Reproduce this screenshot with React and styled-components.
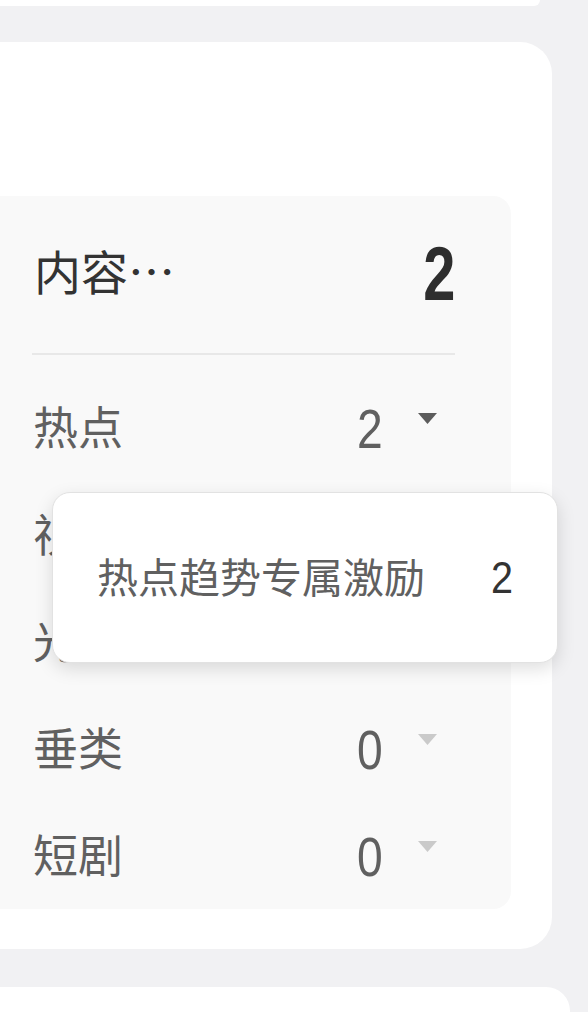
import React from 'react'
import styled, { createGlobalStyle, css } from 'styled-components'

const GlobalStyle = createGlobalStyle`
  html, body {
    margin: 0;
    padding: 0;
    background: #f1f1f3;
  }
  body {
    font-family: "Noto Sans CJK SC", "Noto Sans", sans-serif;
    overflow: hidden;
  }
`

const Page = styled.div`
  display: flex;
  flex-direction: column;
  height: 1012px;
  overflow: hidden;
`
const TopCard = styled.div`
  height: 6px;
  margin-right: 48px;
  background: #fff;
  border-radius: 0 0 24px 0;
  flex-shrink: 0;
`
const MainCard = styled.div`
  margin: 36px 36px 0 -40px;
  padding: 154px 41px 40px 0;
  background: #fff;
  border-radius: 0 32px 32px 0;
  flex-shrink: 0;
`
const Panel = styled.div`
  background: #f9f9f9;
  border-radius: 0 18px 18px 0;
  padding: 0 56px 0 73px;
`
const Header = styled.div`
  height: 157px;
  display: flex;
  align-items: center;
  justify-content: space-between;
`
const Title = styled.div`
  font-size: 47px;
  color: #333;
  line-height: 1;
  margin: 0 0 10px 1px;
`
// digits in the reference use a narrow face, so squeeze them from the right edge
const Digits = styled.div`
  font-family: "Liberation Sans", Arial, sans-serif;
  line-height: 1;
  transform-origin: right center;
`
const BigNum = styled(Digits)`
  font-weight: 700;
  font-size: 76px;
  color: #2e2e2e;
  transform: scaleX(0.76);
  margin-bottom: 2px;
`
const Divider = styled.div`
  height: 2px;
  background: #e8e8e8;
  margin-left: -1px;
`
const List = styled.div`
  padding-top: 19px;
`
const Row = styled.div`
  position: relative;
  height: 107px;
  display: flex;
  align-items: center;
  justify-content: space-between;
`
const Label = styled.div`
  font-size: 45px;
  color: #606060;
  line-height: 1;
  margin-bottom: 5px;
`
const Value = styled.div`
  display: flex;
  align-items: center;
  padding-right: 18px;
`
const Num = styled(Digits)`
  font-size: 55px;
  color: #606060;
  transform: scaleX(0.84);
  margin-top: 4px;
`
const Caret = styled.svg`
  width: 19px;
  height: 11px;
  margin-left: 35px;
  margin-bottom: 18px;
  fill: ${props => (props.active ? '#5c5c5c' : '#cacaca')};
`
const Popover = styled.div`
  position: absolute;
  z-index: 2;
  top: 118px;
  left: 19px;
  width: 506px;
  height: 171px;
  box-sizing: border-box;
  padding: 0 44px 0 44px;
  display: flex;
  align-items: center;
  justify-content: space-between;
  background: #fff;
  border: 1.5px solid #e2e2e2;
  border-radius: 18px;
  box-shadow: 0 6px 18px rgba(0, 0, 0, 0.13);
`
const PopLabel = styled.div`
  font-size: 41px;
  color: #606060;
  line-height: 1;
  margin-bottom: 4px;
`
const PopNum = styled(Digits)`
  font-size: 45px;
  color: #333;
  transform: scaleX(0.88);
  ${props => props.dim && css`
    color: #606060;
  `}
`
const BottomCard = styled.div`
  margin-top: 38px;
  margin-right: 18px;
  height: 40px;
  background: #fff;
  border-radius: 0 24px 0 0;
  flex-shrink: 0;
`

const rows = [
  { name: '热点', count: 2, active: true, items: [{ name: '热点趋势专属激励', count: 2 }] },
  { name: '视频', count: 0 },
  { name: '光合', count: 0 },
  { name: '垂类', count: 0 },
  { name: '短剧', count: 0 },
]

const CaretIcon = ({ active }) => (
  <Caret active={active} viewBox="0 0 19 11">
    <polygon points="0,0 19,0 9.5,11" />
  </Caret>
)

const CategoryRow = ({ row }) => (
  <Row>
    <Label>{row.name}</Label>
    <Value>
      <Num>{row.count}</Num>
      <CaretIcon active={row.active} />
    </Value>
    {row.items && (
      <Popover>
        {row.items.map(item => (
          <React.Fragment key={item.name}>
            <PopLabel>{item.name}</PopLabel>
            <PopNum>{item.count}</PopNum>
          </React.Fragment>
        ))}
      </Popover>
    )}
  </Row>
)

export default function App() {
  return (
    <Page>
      <GlobalStyle />
      <TopCard />
      <MainCard>
        <Panel>
          <Header>
            <Title>内容…</Title>
            <BigNum>2</BigNum>
          </Header>
          <Divider />
          <List>
            {rows.map(row => (
              <CategoryRow key={row.name} row={row} />
            ))}
          </List>
        </Panel>
      </MainCard>
      <BottomCard />
    </Page>
  )
}
